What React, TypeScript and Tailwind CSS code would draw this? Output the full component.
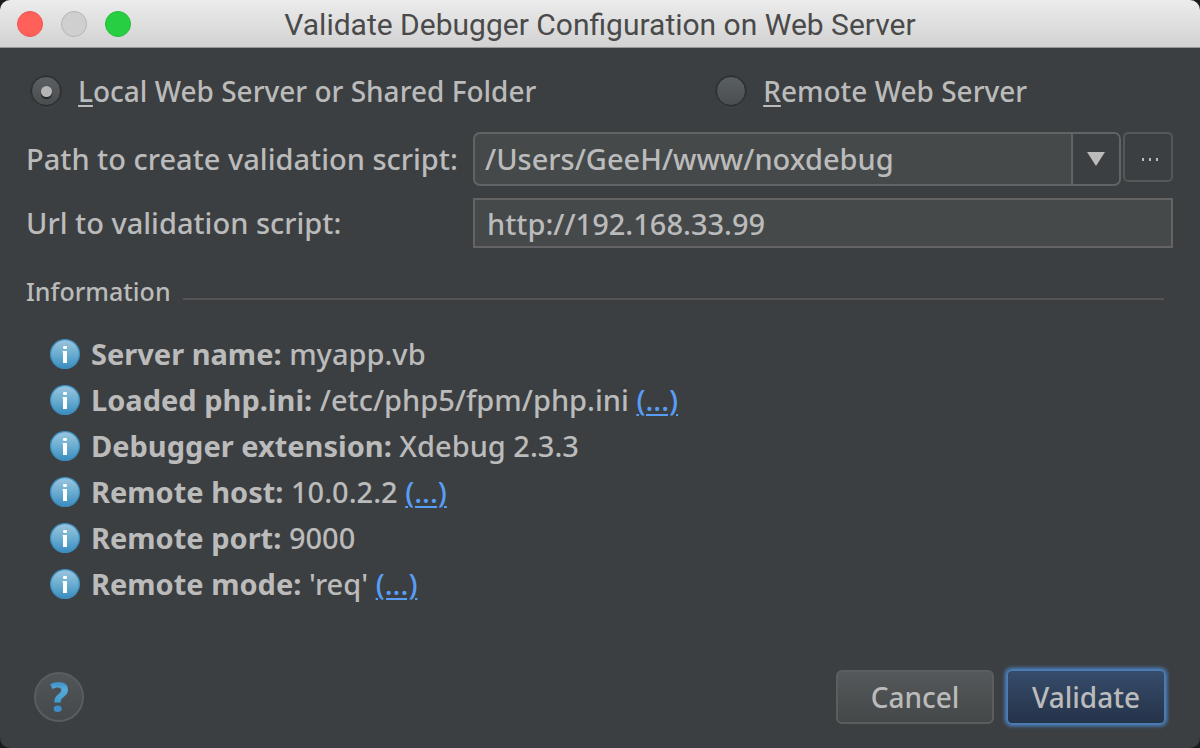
import { useState } from "react";

type InfoItem = { label: string; value: string; more?: boolean };

const items: InfoItem[] = [
  { label: "Server name:", value: "myapp.vb" },
  { label: "Loaded php.ini:", value: "/etc/php5/fpm/php.ini", more: true },
  { label: "Debugger extension:", value: "Xdebug 2.3.3" },
  { label: "Remote host:", value: "10.0.2.2", more: true },
  { label: "Remote port:", value: "9000" },
  { label: "Remote mode:", value: "'req'", more: true },
];

function InfoIcon() {
  return (
    <svg viewBox="0 0 30 30" className="size-[30px] shrink-0" aria-hidden="true">
      <defs>
        <linearGradient id="info-fill" x1="0" y1="0" x2="0" y2="1">
          <stop offset="0" stopColor="#9cc6de" />
          <stop offset="0.5" stopColor="#6badd0" />
          <stop offset="1" stopColor="#3a8dc0" />
        </linearGradient>
      </defs>
      <circle cx="15" cy="15" r="14.4" fill="url(#info-fill)" stroke="#3c8dbd" strokeWidth="1.3" />
      <rect x="13" y="7" width="4" height="3" rx="1.2" fill="#fff" />
      <path d="M12.600 12H17v12h-4V13.400h-.4z" fill="#fff" />
    </svg>
  );
}

function HelpIcon() {
  return (
    <svg viewBox="0 0 20 32" className="h-8 w-5" aria-hidden="true">
      <defs>
        <linearGradient id="help-hook" x1="0" y1="0" x2="0" y2="1">
          <stop offset="0" stopColor="#3e8fc6" />
          <stop offset="0.35" stopColor="#54aad8" />
          <stop offset="1" stopColor="#429bd0" />
        </linearGradient>
      </defs>
      <path
        d="M1.2 3.2C3.8 1.7 6.8 1 10 1c5.600 0 9 2.900 9 7.600 0 3.700-1.900 5.700-4.300 7.500-2.200 1.700-3 2.600-3 5.400H5.400c0-4.200 1-5.900 3.700-8.100 2-1.600 3.200-2.600 3.200-4.300 0-1.600-1.200-2.500-3.300-2.500-2 0-3.800.6-5.500 1.500z"
        fill="url(#help-hook)"
      />
      <ellipse cx="8.700" cy="27.800" rx="4" ry="3.300" fill="#3d8ccb" />
    </svg>
  );
}

type RadioProps = { first: string; rest: string; value: string; checked: boolean; onSelect: (v: string) => void };

function Radio({ first, rest, value, checked, onSelect }: RadioProps) {
  return (
    <label className="flex items-center gap-[17px]">
      <input
        type="radio"
        name="server-kind"
        value={value}
        checked={checked}
        onChange={() => onSelect(value)}
        className="grid size-[30px] shrink-0 appearance-none place-items-center rounded-full border border-[#2b2c2d] bg-linear-to-b from-[#5a5f62] to-[#4a4e50] shadow-[0_0_0_1px_#333536,0_2px_1px_#46494b] checked:before:size-[11px] checked:before:rounded-full checked:before:bg-[#b5b5b5] checked:before:shadow-[0_2px_1px_#242627] checked:before:content-['']"
      />
      <span>
        <span className="underline decoration-2 underline-offset-3">{first}</span>
        {rest}
      </span>
    </label>
  );
}

export default function App() {
  const [kind, setKind] = useState("local");
  const [path, setPath] = useState("/Users/GeeH/www/noxdebug");
  const [url, setUrl] = useState("http://192.168.33.99");

  return (
    <div className="min-h-screen bg-[#1d1a1b] font-['Noto_Sans',sans-serif] text-[28px] leading-[46px] font-medium text-[#bbbbbb]">
      <div className="flex min-h-screen flex-col overflow-hidden rounded-[10px] bg-[#3c3f41]">
        <header className="flex h-12 items-center border-b border-[#999999] bg-linear-to-b from-[#ececec] to-[#d2d2d2] px-[17px]">
          <div className="flex flex-1 gap-[18px]">
            <button aria-label="Close" className="size-[26px] rounded-full border border-[#f0544e] bg-[#ff6059]" />
            <button aria-label="Minimize" className="size-[26px] rounded-full border border-[#b5b5b5] bg-[#cfcfcf]" />
            <button aria-label="Zoom" className="size-[26px] rounded-full border border-[#1fbd37] bg-[#28ce42]" />
          </div>
          <h1 className="pt-[2px] font-['Roboto',sans-serif] text-[30px] font-normal text-[#4a4a4a]">
            Validate Debugger Configuration on Web Server
          </h1>
          <div className="flex-1" />
        </header>

        <main className="flex flex-1 flex-col pt-5 pr-[27px] pb-[23px] pl-[26px]">
          <div className="grid grid-cols-[3fr_2fr] pl-[5px]">
            <Radio first="L" rest="ocal Web Server or Shared Folder" value="local" checked={kind === "local"} onSelect={setKind} />
            <Radio first="R" rest="emote Web Server" value="remote" checked={kind === "remote"} onSelect={setKind} />
          </div>

          <div className="mt-[18px] grid grid-cols-[447px_1fr] items-center gap-y-3 text-[29px]">
            <label htmlFor="path">Path to create validation script:</label>
            <div className="flex items-start gap-[2px]">
              <div className="flex h-[54px] min-w-0 flex-1 overflow-hidden rounded-[7px] border-2 border-[#616364] bg-[#45494a]">
                <input
                  id="path"
                  value={path}
                  onChange={(e) => setPath(e.target.value)}
                  className="min-w-0 flex-1 bg-transparent px-[10px] outline-none"
                />
                <button aria-label="Show recent paths" className="grid w-12 place-items-center border-l-2 border-[#616364] bg-[#3c3f41]">
                  <svg viewBox="0 0 18 14" className="h-[14px] w-[18px]" aria-hidden="true">
                    <path d="M0 0h18L9 14z" fill="#bbbbbb" />
                  </svg>
                </button>
              </div>
              <button aria-label="Browse" className="grid size-[50px] place-items-center rounded-[5px] border-2 border-[#555758]">
                <svg viewBox="0 0 16 3" className="mt-1 ml-1 h-[3px] w-4" aria-hidden="true">
                  <path d="M0 0h2v3H0zM7 0h2v3H7zM14 0h2v3h-2z" fill="#bbbbbb" />
                </svg>
              </button>
            </div>
            <label htmlFor="url">Url to validation script:</label>
            <input
              id="url"
              value={url}
              onChange={(e) => setUrl(e.target.value)}
              className="h-[50px] w-full min-w-0 border-2 border-[#646464] bg-[#45494a] px-3 outline-none"
            />
          </div>

          <section className="mt-5">
            <div className="flex items-center gap-3 pr-[9px]">
              <h2 className="text-[25px]">Information</h2>
              <div className="mt-4 h-[2px] flex-1 bg-[#555354]" />
            </div>
            <ul className="mt-[17px] pl-6 text-[29px]">
              {items.map((item) => (
                <li key={item.label} className="flex items-center gap-[11px]">
                  <InfoIcon />
                  <span>
                    <b className="font-bold">{item.label}</b> {item.value}
                    {item.more && (
                      <>
                        {" "}
                        <a href="#details" className="text-[#589df6] underline decoration-2 underline-offset-3">
                          (...)
                        </a>
                      </>
                    )}
                  </span>
                </li>
              ))}
            </ul>
          </section>

          <footer className="mt-auto flex items-center gap-3 pr-[7px] pl-2">
            <button aria-label="Help" className="mr-auto grid size-[50px] place-items-center rounded-full border-2 border-[#5a5c5d] bg-linear-to-b from-[#505558] to-[#45494b]">
              <HelpIcon />
            </button>
            <button className="h-[54px] w-[158px] rounded-[6px] border-2 border-[#5b5e5f] bg-linear-to-b from-[#54585a] to-[#444849]">
              Cancel
            </button>
            <button className="h-[56px] w-[160px] rounded-[6px] border-2 border-[#4a7bb3] bg-linear-to-b from-[#364c6b] to-[#253349] shadow-[0_0_3px_2px_#466d9c]">
              Validate
            </button>
          </footer>
        </main>
      </div>
    </div>
  );
}
